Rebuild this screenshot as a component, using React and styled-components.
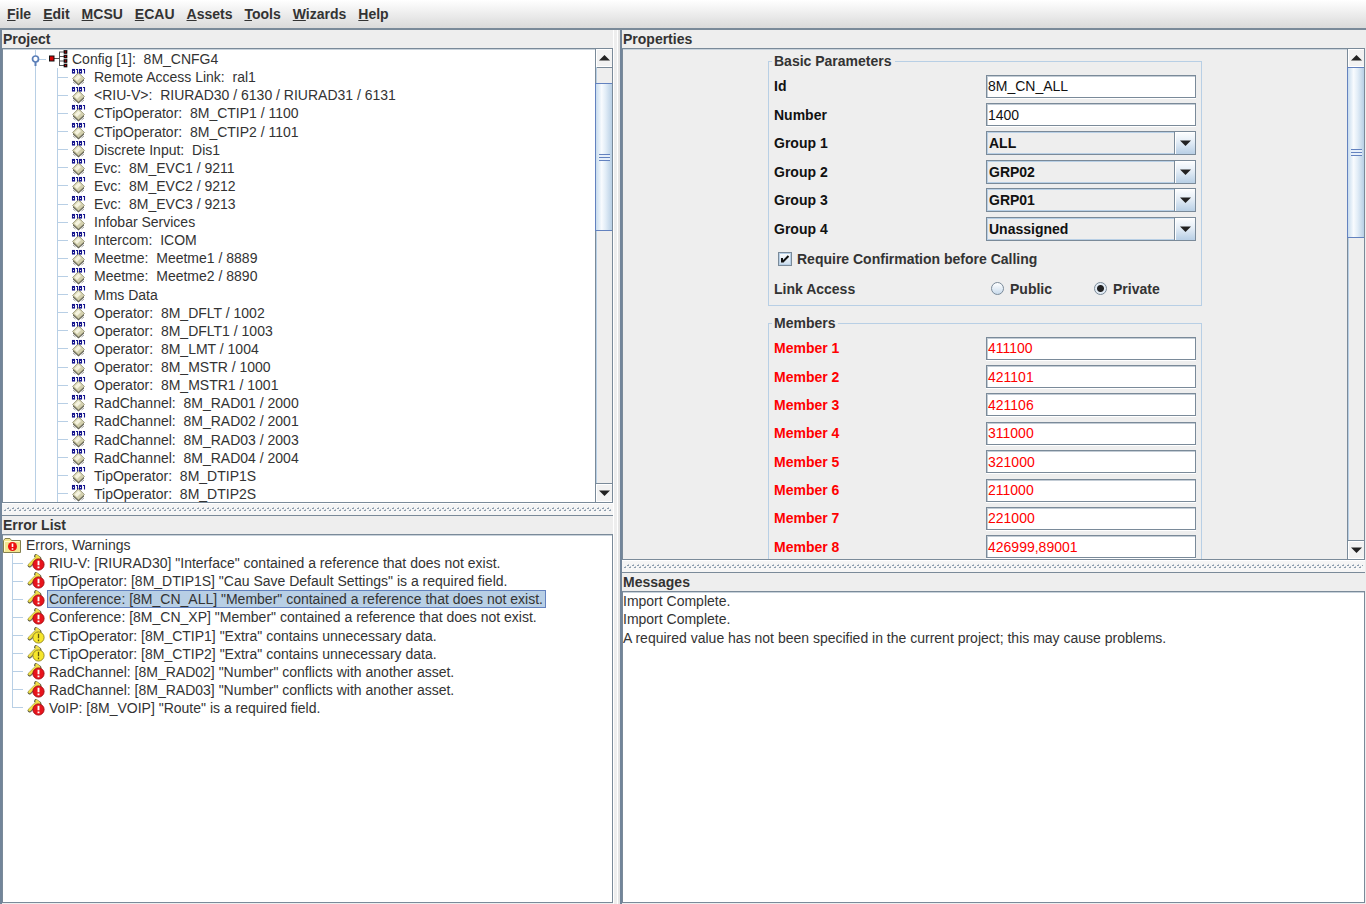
import React from "react";
import styled, { createGlobalStyle, css } from "styled-components";

const LINE = "#7a8a99";
const PALE = "#b8cfe5";
const FACE = "#eeeeee";

const GlobalStyle = createGlobalStyle`
  *, *::before, *::after { box-sizing: border-box; }
  html, body, #root { height: 100%; }
  body {
    margin: 0;
    overflow: hidden;
    background: ${FACE};
    color: #333;
    font-family: "Liberation Sans", Arial, sans-serif;
    font-size: 14px;
    line-height: 18px;
  }
  button, input, select { font: inherit; color: inherit; margin: 0; padding: 0; }
`;

const Window = styled.div`
  display: flex;
  flex-direction: column;
  height: 100%;
`;

const MenuBar = styled.nav`
  display: flex;
  flex: none;
  gap: 12px;
  height: 28px;
  padding: 0 7px;
  background: linear-gradient(#ffffff, #f4f4f4 30%, #dadada);
`;

const MenuButton = styled.button`
  border: 0;
  background: none;
  font-weight: bold;
  white-space: nowrap;
  &::first-letter { text-decoration: underline; }
`;

const Main = styled.main`
  display: grid;
  flex: 1;
  min-height: 0;
  grid-template-columns: minmax(0, 613fr) 7px minmax(0, 746fr);
  border-top: 2px solid ${LINE};
`;

const Column = styled.div`
  display: grid;
  min-height: 0;
  grid-template-rows: 18px minmax(0, ${(p) => p.$top}fr) 12px 19px minmax(0, ${(p) => p.$bottom}fr);
  border-left: 2px solid #72859a;
  padding-bottom: 1px;
  padding-right: ${(p) => (p.$inset ? 1 : 0)}px;
`;

const Gutter = styled.div`
  background: linear-gradient(90deg, #fff 0 1px, ${FACE} 1px 4px, #fff 4px 5px, #e4e4e4 5px);
`;

const PaneTitle = styled.h2`
  margin: 0;
  padding-left: 1px;
  font-size: 14px;
  line-height: 18px;
  font-weight: bold;
  ${(p) => p.$ruled && css`border-top: 1px solid ${LINE};`}
`;

const Pane = styled.section`
  display: flex;
  min-width: 0;
  min-height: 0;
  border: 1px solid ${LINE};
  box-shadow: inset 0 1px 0 #c8d2db;
  background: ${(p) => (p.$face ? FACE : "#fff")};
`;

const Viewport = styled.div`
  flex: 1;
  min-width: 0;
  overflow: hidden;
`;

const Divider = styled.div`
  display: flex;
  border-top: 1px solid #fff;
  padding: 3px 2px;
  background: #f5f5f5;
  svg { display: block; }
`;

const Bumps = ({ id }) => (
  <svg width="100%" height="5" aria-hidden="true">
    <defs>
      <pattern id={id} width="5" height="5" patternUnits="userSpaceOnUse">
        <path d="M0 3H2V4H0ZM3 1H5V2H3Z" fill="#8b9cad" />
        <path d="M1 2H2V3H1ZM4 0H5V1H4Z" fill="#b9c3cd" />
        <path d="M2 4H3V5H2Z" fill="#fff" />
      </pattern>
    </defs>
    <rect width="100%" height="5" fill={`url(#${id})`} />
  </svg>
);

/* Scroll bar */

const Bar = styled.div`
  display: flex;
  flex: none;
  flex-direction: column;
  width: 17px;
  border-left: 1px solid ${LINE};
  background: ${FACE};
`;

const BarButton = styled.button`
  display: flex;
  flex: none;
  align-items: center;
  justify-content: center;
  height: 18px;
  border: 1px solid #fff;
  border-width: 1px 0;
  background: #f2f2f2;
  box-shadow: inset 1px 0 #fff, 0 ${(p) => (p.$down ? -1 : 1)}px ${LINE};
`;

const Track = styled.div`
  display: flex;
  flex: 1;
  flex-direction: column;
  border-left: 1px solid ${PALE};
`;

const Space = styled.div`
  flex: ${(p) => p.$share};
`;

const Thumb = styled.div`
  display: flex;
  align-items: center;
  justify-content: center;
  flex: ${(p) => p.$share};
  margin-left: -2px;
  border: 1px solid #6382bf;
  border-right: 0;
  background: linear-gradient(90deg, #c8dcee, #f8fbfe 35%, #e2edf7 60%, #b8cfe5);
`;

const Grip = styled.div`
  width: 11px;
  height: 7px;
  background: repeating-linear-gradient(#6382bf 0 1px, #e6effa 1px 3px);
`;

const Arrow = ({ down }) => (
  <svg width="11" height="6" viewBox="0 0 11 6" aria-hidden="true">
    <path d={down ? "M0 0.5H11L5.5 6Z" : "M0 5.5H11L5.5 0Z"} fill="#222" />
  </svg>
);

function ScrollBar({ before, thumb, after }) {
  return (
    <Bar>
      <BarButton type="button" aria-label="Scroll up"><Arrow /></BarButton>
      <Track>
        <Space $share={before} />
        <Thumb $share={thumb}><Grip /></Thumb>
        <Space $share={after} />
      </Track>
      <BarButton type="button" aria-label="Scroll down" $down><Arrow down /></BarButton>
    </Bar>
  );
}

/* Trees */

const List = styled.ul`
  display: grid;
  grid-auto-rows: 1fr;
  height: ${(p) => p.$height}px;
  margin: 1px 0 0;
  padding: 0;
  list-style: none;
`;

const Row = styled.li`
  display: flex;
  align-items: center;
  min-height: 0;
  white-space: pre;
  padding-left: ${(p) => p.$indent || 0}px;
`;

const Guide = styled.span`
  flex: none;
  align-self: stretch;
  width: ${(p) => p.$width}px;
  background:
    linear-gradient(${PALE}, ${PALE}) 0 0 / 1px ${(p) => (p.$last ? "50%" : "100%")} no-repeat,
    linear-gradient(${PALE}, ${PALE}) 0 50% / ${(p) => p.$arm || 0}px 1px no-repeat;
`;

const IconBox = styled.span`
  display: flex;
  flex: none;
  width: ${(p) => p.$width}px;
  svg { display: block; overflow: visible; }
`;

const RowText = styled.span`
  line-height: 16px;
  padding: 0 2px 0 1px;
  border: 1px solid transparent;
  ${(p) => p.$selected && css`background: ${PALE}; border-color: #6382bf;`}
`;

const KnobIcon = () => (
  <svg width="16" height="18" viewBox="0 0 16 18" aria-hidden="true">
    <path d="M4.500 0V19" stroke={PALE} />
    <path d="M7 9.500H15" stroke={PALE} />
    <path d="M4.500 11V16" stroke="#5b7fb8" strokeWidth="2" />
    <circle cx="4.500" cy="9" r="3" fill="#fff" stroke="#5b7fb8" strokeWidth="1.700" />
  </svg>
);

const ConfigIcon = () => (
  <svg width="20" height="18" viewBox="0 0 20 18" aria-hidden="true">
    <path d="M4 8.500H10M10.500 2V15.500M10 2H15M10 6.500H15M10 11H15M10 15.500H15" fill="none" stroke="#555" />
    <rect x="0.500" y="6" width="4.500" height="5" fill="#d80000" stroke="#111" />
    <g fill="#2a0505" stroke="#111" strokeWidth="0.700">
      <rect x="15" y="0.500" width="3" height="3" />
      <rect x="15" y="5" width="3" height="3" />
      <rect x="15" y="9.500" width="3" height="3" />
      <rect x="15" y="14" width="3" height="3" />
    </g>
    <path d="M16 2H17M16 6.500H17M16 11H17M16 15.500H17" stroke="#e00000" />
  </svg>
);

const AssetIcon = () => (
  <svg width="15" height="17" viewBox="0 0 15 17" aria-hidden="true">
    <path d="M1 10L6.500 5L12 10V11.500L6.500 16.500L1 11.500Z" fill="#55554a" />
    <path d="M1 13L3.500 15M12 13L9.500 15" stroke="#a5a5a0" />
    <path d="M0.500 9.500L6.500 3.500L12.500 9.500L6.500 15Z" fill="#d3d0ae" stroke="#8d8a6c" strokeWidth="0.700" />
    <path d="M2.500 9.500L6.500 5.500L9 8L5 12Z" fill="#f5f3df" />
    <g fill="none" stroke="#14148c" strokeWidth="1.100">
      <rect x="0.500" y="0.500" width="2" height="3.500" />
      <path d="M4 0.500H5.500V4.500" />
      <rect x="7.500" y="0.500" width="2" height="3.500" />
      <path d="M11 0.500H12.500V4.500" />
    </g>
  </svg>
);

const FolderIcon = () => (
  <svg width="19" height="17" viewBox="0 0 19 17" aria-hidden="true">
    <path d="M0.500 15.500V3.500L2 1.500H7L8.500 3.500H17.500V15.500Z" fill="#f2e690" stroke="#84804e" />
    <path d="M1.500 14.500V4.500H16.500" fill="none" stroke="#fffbd0" />
    <circle cx="9.500" cy="9.500" r="4.500" fill="#ee1010" />
    <path d="M9.500 6.500V10M9.500 11.200V12.800" stroke="#fff" strokeWidth="1.600" />
  </svg>
);

const IssueIcon = ({ warning }) => (
  <svg width="19" height="18" viewBox="0 0 19 18" aria-hidden="true">
    <path d="M2.500 11.500L10 4M9 2L12.500 4.500V7" fill="none" stroke="#55523a" strokeWidth="3.800" strokeLinecap="round" strokeLinejoin="round" />
    <path d="M2.500 11L10 3.500M9.500 2L12 4V7" fill="none" stroke="#efe04a" strokeWidth="2.600" strokeLinecap="round" strokeLinejoin="round" />
    <path d="M3 13.500L7 9.500" stroke="#777" />
    <circle cx="11.500" cy="10.500" r="5.600" fill={warning ? "#f6e62c" : "#e8141c"} stroke={warning ? "#8f8222" : "#a00a12"} strokeWidth="0.900" />
    <path d="M11.500 6.700V11.300M11.500 12.500V14.300" stroke={warning ? "#5e5510" : "#fff"} strokeWidth={warning ? 1.3 : 1.9} />
  </svg>
);

const assets = [
  "Remote Access Link:  ral1",
  "<RIU-V>:  RIURAD30 / 6130 / RIURAD31 / 6131",
  "CTipOperator:  8M_CTIP1 / 1100",
  "CTipOperator:  8M_CTIP2 / 1101",
  "Discrete Input:  Dis1",
  "Evc:  8M_EVC1 / 9211",
  "Evc:  8M_EVC2 / 9212",
  "Evc:  8M_EVC3 / 9213",
  "Infobar Services",
  "Intercom:  ICOM",
  "Meetme:  Meetme1 / 8889",
  "Meetme:  Meetme2 / 8890",
  "Mms Data",
  "Operator:  8M_DFLT / 1002",
  "Operator:  8M_DFLT1 / 1003",
  "Operator:  8M_LMT / 1004",
  "Operator:  8M_MSTR / 1000",
  "Operator:  8M_MSTR1 / 1001",
  "RadChannel:  8M_RAD01 / 2000",
  "RadChannel:  8M_RAD02 / 2001",
  "RadChannel:  8M_RAD03 / 2003",
  "RadChannel:  8M_RAD04 / 2004",
  "TipOperator:  8M_DTIP1S",
  "TipOperator:  8M_DTIP2S",
];

const issues = [
  { text: 'RIU-V: [RIURAD30] "Interface" contained a reference that does not exist.' },
  { text: 'TipOperator: [8M_DTIP1S] "Cau Save Default Settings" is a required field.' },
  { text: 'Conference: [8M_CN_ALL] "Member" contained a reference that does not exist.', selected: true },
  { text: 'Conference: [8M_CN_XP] "Member" contained a reference that does not exist.' },
  { text: 'CTipOperator: [8M_CTIP1] "Extra" contains unnecessary data.', warning: true },
  { text: 'CTipOperator: [8M_CTIP2] "Extra" contains unnecessary data.', warning: true },
  { text: 'RadChannel: [8M_RAD02] "Number" conflicts with another asset.' },
  { text: 'RadChannel: [8M_RAD03] "Number" conflicts with another asset.' },
  { text: 'VoIP: [8M_VOIP] "Route" is a required field.' },
];

const messages = [
  "Import Complete.",
  "Import Complete.",
  "A required value has not been specified in the current project; this may cause problems.",
];

/* Properties form */

const Form = styled.form`
  display: flex;
  flex-direction: column;
  align-items: center;
  gap: 9px;
  padding-top: 4px;
`;

const Group = styled.fieldset`
  width: 434px;
  max-width: 100%;
  margin: 0;
  padding: 3px 4px 2px 5px;
  border: 1px solid ${PALE};
`;

const Legend = styled.legend`
  padding: 0 3px 0 2px;
  margin-left: -2px;
  font-weight: bold;
  line-height: 16px;
`;

const Fields = styled.div`
  display: grid;
  grid-auto-rows: 1fr;
  height: ${(p) => p.$height}px;
  color: ${(p) => (p.$error ? "#ff0000" : "#111")};
`;

const Field = styled.div`
  display: grid;
  grid-template-columns: 212px minmax(0, 1fr);
  align-items: center;
  min-height: 0;
`;

const Label = styled.label`
  font-weight: bold;
`;

const TextBox = styled.input`
  width: 210px;
  height: 23px;
  padding: 0 1px;
  border: 1px solid ${LINE};
  border-radius: 0;
  outline: 0;
  background: #fff;
  box-shadow: inset 1px 1px #c3ccd5, 0 1px #fff;
`;

const Combo = styled.div`
  display: grid;
  grid-template-columns: minmax(0, 1fr) 22px;
  width: 210px;
  height: 24px;
`;

const Select = styled.select`
  grid-area: 1 / 1 / 2 / 3;
  appearance: none;
  padding: 0 24px 0 2px;
  border: 1px solid ${LINE};
  border-radius: 0;
  background: ${FACE};
  box-shadow: inset 0 0 0 1px ${PALE};
  font-weight: bold;
`;

const ComboArrow = styled.span`
  display: flex;
  grid-area: 1 / 2 / 2 / 3;
  align-items: center;
  justify-content: center;
  border: 1px solid ${LINE};
  background: linear-gradient(#fdfeff, #e4edf6 45%, #b8cfe5);
  box-shadow: inset 1px 1px #fff;
  pointer-events: none;
`;

const CheckRow = styled.label`
  display: flex;
  align-items: center;
  gap: 5px;
  height: 31px;
  padding-left: 4px;
  font-weight: bold;
`;

const CheckMark = styled.span`
  display: grid;
  svg, input { grid-area: 1 / 1; }
  svg { pointer-events: none; }
`;

const Check = styled.input`
  appearance: none;
  width: 14px;
  height: 14px;
  border: 1px solid ${LINE};
  background: linear-gradient(#fff, #c9dbec);
  box-shadow: inset 0 0 0 1px ${PALE};
`;

const LinkRow = styled(Field)`
  height: 29px;
  font-weight: bold;
`;

const Options = styled.div`
  display: flex;
  padding-left: 5px;
`;

const Option = styled.label`
  display: flex;
  align-items: center;
  gap: 6px;
  width: 105px;
`;

const Radio = styled.input`
  appearance: none;
  width: 13px;
  height: 13px;
  border: 1px solid ${LINE};
  border-radius: 50%;
  background: linear-gradient(#fff, #c9dbec);
  &:checked {
    background: radial-gradient(circle, #222 0 3px, #e3ecf5 4px);
  }
`;

const groups = [
  ["Group 1", "ALL"],
  ["Group 2", "GRP02"],
  ["Group 3", "GRP01"],
  ["Group 4", "Unassigned"],
];

const members = ["411100", "421101", "421106", "311000", "321000", "211000", "221000", "426999,89001"];

function TextField({ id, label, value }) {
  return (
    <Field>
      <Label htmlFor={id}>{label}</Label>
      <TextBox id={id} type="text" defaultValue={value} />
    </Field>
  );
}

function SelectField({ id, label, value }) {
  return (
    <Field>
      <Label htmlFor={id}>{label}</Label>
      <Combo>
        <Select id={id} defaultValue={value}>
          <option>{value}</option>
        </Select>
        <ComboArrow><Arrow down /></ComboArrow>
      </Combo>
    </Field>
  );
}

function Properties() {
  return (
    <Form>
      <Group>
        <Legend>Basic Parameters</Legend>
        <Fields $height={171}>
          <TextField id="asset-id" label="Id" value="8M_CN_ALL" />
          <TextField id="asset-number" label="Number" value="1400" />
          {groups.map(([label, value], i) => (
            <SelectField key={label} id={`group-${i}`} label={label} value={value} />
          ))}
        </Fields>
        <CheckRow>
          <CheckMark>
            <Check type="checkbox" defaultChecked />
            <svg width="14" height="14" viewBox="0 0 14 14" aria-hidden="true">
              <path d="M4 6V10.500M4.500 10L10.500 4" fill="none" stroke="#111" strokeWidth="2" />
            </svg>
          </CheckMark>
          Require Confirmation before Calling
        </CheckRow>
        <LinkRow role="radiogroup" aria-labelledby="link-access">
          <span id="link-access">Link Access</span>
          <Options>
            <Option><Radio type="radio" name="access" />Public</Option>
            <Option><Radio type="radio" name="access" defaultChecked />Private</Option>
          </Options>
        </LinkRow>
      </Group>
      <Group>
        <Legend>Members</Legend>
        <Fields $height={227} $error>
          {members.map((value, i) => (
            <TextField key={value} id={`member-${i}`} label={`Member ${i + 1}`} value={value} />
          ))}
        </Fields>
      </Group>
    </Form>
  );
}

const MessageList = styled(List)`
  margin-top: 0;
`;

export default function App() {
  return (
    <Window>
      <GlobalStyle />
      <MenuBar>
        {["File", "Edit", "MCSU", "ECAU", "Assets", "Tools", "Wizards", "Help"].map((m) => (
          <MenuButton key={m} type="button">{m}</MenuButton>
        ))}
      </MenuBar>
      <Main>
        <Column $top={455} $bottom={369}>
          <PaneTitle>Project</PaneTitle>
          <Pane>
            <Viewport>
              <List $height={453}>
                <Row $indent={28}>
                  <IconBox $width={18}><KnobIcon /></IconBox>
                  <IconBox $width={21}><ConfigIcon /></IconBox>
                  <RowText>Config [1]:  8M_CNFG4</RowText>
                </Row>
                {assets.map((text) => (
                  <Row key={text} $indent={32}>
                    <Guide $width={22} />
                    <Guide $width={15} $arm={11} />
                    <IconBox $width={20}><AssetIcon /></IconBox>
                    <RowText>{text}</RowText>
                  </Row>
                ))}
              </List>
            </Viewport>
            <ScrollBar before={16} thumb={147} after={254} />
          </Pane>
          <Divider><Bumps id="bumps-left" /></Divider>
          <PaneTitle $ruled>Error List</PaneTitle>
          <Pane>
            <Viewport>
              <List $height={181}>
                <Row>
                  <IconBox $width={21}><FolderIcon /></IconBox>
                  <RowText>Errors, Warnings</RowText>
                </Row>
                {issues.map((issue, i) => (
                  <Row key={issue.text} $indent={9}>
                    <Guide $width={15} $arm={11} $last={i === issues.length - 1} />
                    <IconBox $width={20}><IssueIcon warning={issue.warning} /></IconBox>
                    <RowText $selected={issue.selected}>{issue.text}</RowText>
                  </Row>
                ))}
              </List>
            </Viewport>
          </Pane>
        </Column>
        <Gutter />
        <Column $top={512} $bottom={312} $inset>
          <PaneTitle>Properties</PaneTitle>
          <Pane $face>
            <Viewport><Properties /></Viewport>
            <ScrollBar before={0} thumb={170} after={304} />
          </Pane>
          <Divider><Bumps id="bumps-right" /></Divider>
          <PaneTitle $ruled>Messages</PaneTitle>
          <Pane>
            <Viewport>
              <MessageList $height={55}>
                {messages.map((text, i) => (
                  <Row key={i}>{text}</Row>
                ))}
              </MessageList>
            </Viewport>
          </Pane>
        </Column>
      </Main>
    </Window>
  );
}
